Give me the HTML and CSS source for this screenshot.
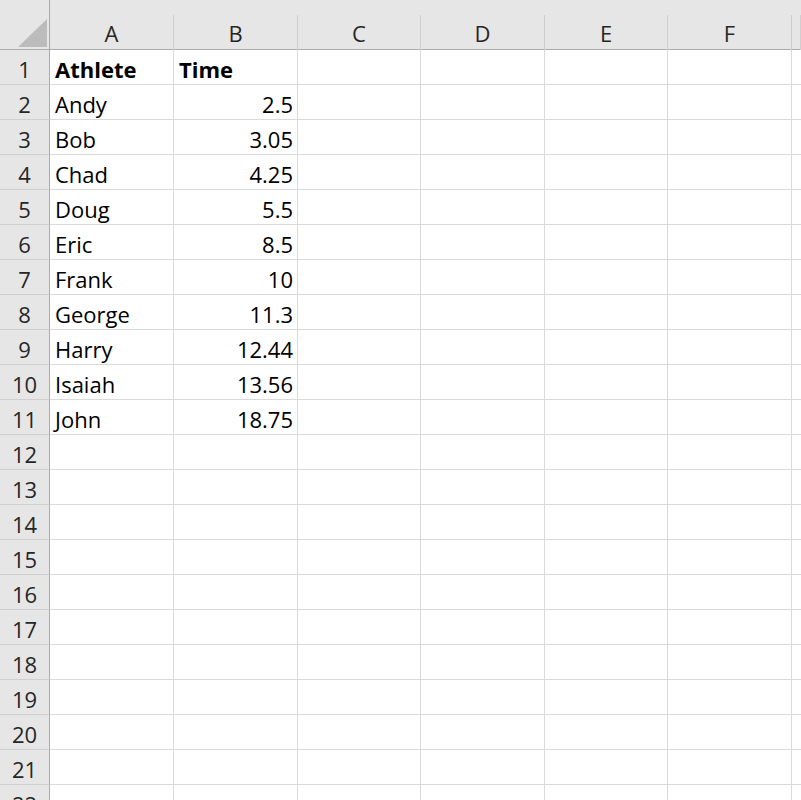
FILE: index.html
```html
<!DOCTYPE html>
<html lang="en">
  <head>
    <meta charset="UTF-8" />
    <meta name="viewport" content="width=device-width, initial-scale=1.0" />
    <title>Athlete times</title>
    <link rel="stylesheet" href="styles.css">
  </head>
  <body>
    <div class="sheet">
      <div class="row headRow">
        <div class="corner">
          <svg width="50" height="50" viewBox="0 0 50 50">
            <polygon points="18,47 47,47 47,19" fill="#bcbcbc" />
          </svg>
        </div>
        <div class="colHead">A</div>
        <div class="colHead">B</div>
        <div class="colHead">C</div>
        <div class="colHead">D</div>
        <div class="colHead">E</div>
        <div class="colHead">F</div>
        <div class="colHead"></div>
      </div>

      <div class="row">
        <div class="rowHead">1</div>
        <div class="cell bold">Athlete</div>
        <div class="cell bold">Time</div>
        <div class="cell"></div><div class="cell"></div><div class="cell"></div><div class="cell"></div><div class="cell"></div>
      </div>
      <div class="row">
        <div class="rowHead">2</div>
        <div class="cell">Andy</div>
        <div class="cell num">2.5</div>
        <div class="cell"></div><div class="cell"></div><div class="cell"></div><div class="cell"></div><div class="cell"></div>
      </div>
      <div class="row">
        <div class="rowHead">3</div>
        <div class="cell">Bob</div>
        <div class="cell num">3.05</div>
        <div class="cell"></div><div class="cell"></div><div class="cell"></div><div class="cell"></div><div class="cell"></div>
      </div>
      <div class="row">
        <div class="rowHead">4</div>
        <div class="cell">Chad</div>
        <div class="cell num">4.25</div>
        <div class="cell"></div><div class="cell"></div><div class="cell"></div><div class="cell"></div><div class="cell"></div>
      </div>
      <div class="row">
        <div class="rowHead">5</div>
        <div class="cell">Doug</div>
        <div class="cell num">5.5</div>
        <div class="cell"></div><div class="cell"></div><div class="cell"></div><div class="cell"></div><div class="cell"></div>
      </div>
      <div class="row">
        <div class="rowHead">6</div>
        <div class="cell">Eric</div>
        <div class="cell num">8.5</div>
        <div class="cell"></div><div class="cell"></div><div class="cell"></div><div class="cell"></div><div class="cell"></div>
      </div>
      <div class="row">
        <div class="rowHead">7</div>
        <div class="cell">Frank</div>
        <div class="cell num">10</div>
        <div class="cell"></div><div class="cell"></div><div class="cell"></div><div class="cell"></div><div class="cell"></div>
      </div>
      <div class="row">
        <div class="rowHead">8</div>
        <div class="cell">George</div>
        <div class="cell num">11.3</div>
        <div class="cell"></div><div class="cell"></div><div class="cell"></div><div class="cell"></div><div class="cell"></div>
      </div>
      <div class="row">
        <div class="rowHead">9</div>
        <div class="cell">Harry</div>
        <div class="cell num">12.44</div>
        <div class="cell"></div><div class="cell"></div><div class="cell"></div><div class="cell"></div><div class="cell"></div>
      </div>
      <div class="row">
        <div class="rowHead">10</div>
        <div class="cell">Isaiah</div>
        <div class="cell num">13.56</div>
        <div class="cell"></div><div class="cell"></div><div class="cell"></div><div class="cell"></div><div class="cell"></div>
      </div>
      <div class="row">
        <div class="rowHead">11</div>
        <div class="cell">John</div>
        <div class="cell num">18.75</div>
        <div class="cell"></div><div class="cell"></div><div class="cell"></div><div class="cell"></div><div class="cell"></div>
      </div>

      <div class="row">
        <div class="rowHead">12</div>
        <div class="cell"></div><div class="cell"></div><div class="cell"></div><div class="cell"></div><div class="cell"></div><div class="cell"></div><div class="cell"></div>
      </div>
      <div class="row">
        <div class="rowHead">13</div>
        <div class="cell"></div><div class="cell"></div><div class="cell"></div><div class="cell"></div><div class="cell"></div><div class="cell"></div><div class="cell"></div>
      </div>
      <div class="row">
        <div class="rowHead">14</div>
        <div class="cell"></div><div class="cell"></div><div class="cell"></div><div class="cell"></div><div class="cell"></div><div class="cell"></div><div class="cell"></div>
      </div>
      <div class="row">
        <div class="rowHead">15</div>
        <div class="cell"></div><div class="cell"></div><div class="cell"></div><div class="cell"></div><div class="cell"></div><div class="cell"></div><div class="cell"></div>
      </div>
      <div class="row">
        <div class="rowHead">16</div>
        <div class="cell"></div><div class="cell"></div><div class="cell"></div><div class="cell"></div><div class="cell"></div><div class="cell"></div><div class="cell"></div>
      </div>
      <div class="row">
        <div class="rowHead">17</div>
        <div class="cell"></div><div class="cell"></div><div class="cell"></div><div class="cell"></div><div class="cell"></div><div class="cell"></div><div class="cell"></div>
      </div>
      <div class="row">
        <div class="rowHead">18</div>
        <div class="cell"></div><div class="cell"></div><div class="cell"></div><div class="cell"></div><div class="cell"></div><div class="cell"></div><div class="cell"></div>
      </div>
      <div class="row">
        <div class="rowHead">19</div>
        <div class="cell"></div><div class="cell"></div><div class="cell"></div><div class="cell"></div><div class="cell"></div><div class="cell"></div><div class="cell"></div>
      </div>
      <div class="row">
        <div class="rowHead">20</div>
        <div class="cell"></div><div class="cell"></div><div class="cell"></div><div class="cell"></div><div class="cell"></div><div class="cell"></div><div class="cell"></div>
      </div>
      <div class="row">
        <div class="rowHead">21</div>
        <div class="cell"></div><div class="cell"></div><div class="cell"></div><div class="cell"></div><div class="cell"></div><div class="cell"></div><div class="cell"></div>
      </div>
      <div class="row">
        <div class="rowHead">22</div>
        <div class="cell"></div><div class="cell"></div><div class="cell"></div><div class="cell"></div><div class="cell"></div><div class="cell"></div><div class="cell"></div>
      </div>
    </div>
  </body>
</html>
```

FILE: styles.css
```css
* {
  margin: 0;
  padding: 0;
  box-sizing: border-box;
}

html,
body {
  height: 100%;
  overflow: hidden;
  background: #fff;
}

body {
  font-family: "Open Sans", "Noto Sans", sans-serif;
  font-size: 22px;
  color: #000;
}

.sheet {
  width: 801px;
  height: 800px;
  overflow: hidden;
}

.row {
  display: grid;
  grid-template-columns: 50px 124px 124px 123px 124px 123px 124px 1fr;
  height: 35px;
}

.headRow {
  height: 50px;
  background: #e6e6e6;
  border-bottom: 1px solid #ababab;
}

.corner {
  border-right: 1px solid #ababab;
}

.corner svg {
  display: block;
}

.colHead {
  display: flex;
  align-items: flex-end;
  justify-content: center;
  margin-top: 15px;
  padding-bottom: 2px;
  border-right: 1px solid #cfcfcf;
  color: #262626;
}

.rowHead {
  display: flex;
  align-items: flex-end;
  justify-content: center;
  padding-bottom: 0;
  background: #e6e6e6;
  border-right: 1px solid #ababab;
  border-bottom: 1px solid #cfcfcf;
  color: #262626;
}

.cell {
  display: flex;
  align-items: flex-end;
  padding: 0 4px 0 5px;
  border-right: 1px solid #dadada;
  border-bottom: 1px solid #dadada;
  white-space: nowrap;
}

.bold {
  font-weight: 700;
}

.num {
  justify-content: flex-end;
}
```
